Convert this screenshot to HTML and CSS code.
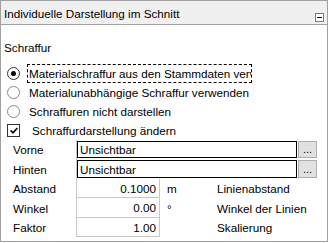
FILE: index.html
```html
<!DOCTYPE html>
<html lang="de">
<head>
    <meta charset="UTF-8">
    <title>Individuelle Darstellung im Schnitt</title>
    <link rel="stylesheet" href="styles.css">
</head>
<body>

    <div class="panel">
        <div class="panel-header">
            <span class="panel-title">Individuelle Darstellung im Schnitt</span>
            <span class="collapse-btn"></span>
        </div>

        <div class="panel-body">
            <div class="group-label">Schraffur</div>

            <!-- Radio options -->
            <div class="option">
                <span class="radio checked"></span>
                <span class="option-text focused">Materialschraffur aus den Stammdaten verwenden</span>
            </div>
            <div class="option">
                <span class="radio"></span>
                <span class="option-text">Materialunabhängige Schraffur verwenden</span>
            </div>
            <div class="option">
                <span class="radio"></span>
                <span class="option-text">Schraffuren nicht darstellen</span>
            </div>
            <div class="option">
                <span class="checkbox">
                    <svg width="8" height="7" viewBox="0 0 8 7"><path d="M0.6 3.4 L3 5.8 L7.4 1" fill="none" stroke="#000" stroke-width="1.6"/></svg>
                </span>
                <span class="option-text check-text">Schraffurdarstellung ändern</span>
            </div>

            <!-- Property grid -->
            <div class="props">
                <div class="prop-row h19">
                    <div class="prop-label">Vorne</div>
                    <div class="prop-input">Unsichtbar</div>
                    <div class="prop-btn">...</div>
                </div>
                <div class="prop-row h20">
                    <div class="prop-label">Hinten</div>
                    <div class="prop-input">Unsichtbar</div>
                    <div class="prop-btn">...</div>
                </div>
                <div class="prop-row h19">
                    <div class="prop-label">Abstand</div>
                    <div class="prop-value">0.1000</div>
                    <div class="prop-unit">m</div>
                    <div class="prop-desc">Linienabstand</div>
                </div>
                <div class="prop-row h20">
                    <div class="prop-label">Winkel</div>
                    <div class="prop-value">0.00</div>
                    <div class="prop-unit">°</div>
                    <div class="prop-desc">Winkel der Linien</div>
                </div>
                <div class="prop-row h19">
                    <div class="prop-label">Faktor</div>
                    <div class="prop-value">1.00</div>
                    <div class="prop-unit"></div>
                    <div class="prop-desc">Skalierung</div>
                </div>
            </div>
        </div>
    </div>

</body>
</html>
```

FILE: styles.css
```css
body {
    margin: 0;
    background: #ffffff;
    font-family: "Liberation Sans", Arial, sans-serif;
    font-size: 11.7px;
    color: #000000;
}

.panel {
    width: 326px;
    height: 240px;
    border: 1px solid #a0a0a0;
    background: #ffffff;
}

.panel-header {
    height: 23px;
    background: #f0f0f0;
    border-bottom: 1px solid #a0a0a0;
    display: flex;
    align-items: center;
    justify-content: space-between;
    padding: 0 3px 0 3px;
}

.panel-title {
    margin-top: 1px;
}

.collapse-btn {
    width: 7px;
    height: 7px;
    border: 1px solid #7a7a7a;
    background: #ffffff;
    margin-top: 9px;
    position: relative;
}

.collapse-btn::after {
    content: "";
    position: absolute;
    left: 1px;
    top: 3px;
    width: 5px;
    height: 1px;
    background: #000000;
}

.panel-body {
    padding-top: 15px;
}

.group-label {
    height: 16px;
    line-height: 16px;
    padding-left: 3px;
    margin-bottom: 8px;
}

.option {
    height: 19px;
    display: flex;
    align-items: center;
    padding-left: 6px;
}

.radio {
    width: 11px;
    height: 11px;
    border: 1px solid #8a8a8a;
    border-radius: 50%;
    background: #ffffff;
    display: flex;
    align-items: center;
    justify-content: center;
    flex-shrink: 0;
}

.radio.checked {
    border-color: #333333;
}

.radio.checked::after {
    content: "";
    width: 5px;
    height: 5px;
    border-radius: 50%;
    background: #000000;
}

.checkbox {
    width: 11px;
    height: 11px;
    border: 1px solid #333333;
    display: flex;
    align-items: center;
    justify-content: center;
    flex-shrink: 0;
}

.option-text {
    margin-left: 9px;
    white-space: nowrap;
}

.option-text.focused {
    margin-left: 7px;
    width: 222px;
    height: 17px;
    line-height: 17px;
    padding-left: 1px;
    border: 1px dashed #000000;
    overflow: hidden;
}

.check-text {
    margin-left: 12px;
}

.prop-row {
    display: flex;
    align-items: stretch;
}

.h19 {
    height: 19px;
}

.h20 {
    height: 20px;
}

.prop-label {
    width: 63px;
    padding-left: 12px;
    display: flex;
    align-items: center;
    border-right: 1px solid #c8c8c8;
}

.prop-input {
    width: 216px;
    margin: 1px 0;
    border: 1px solid #000000;
    padding-left: 2px;
    display: flex;
    align-items: center;
}

.prop-btn {
    width: 17px;
    margin: 1px 0 1px 1px;
    background: #e1e1e1;
    border: 1px solid #adadad;
    display: flex;
    align-items: center;
    justify-content: center;
    font-size: 11px;
    line-height: 1;
}

.prop-value {
    width: 79px;
    padding-right: 3px;
    border-bottom: 1px solid #c8c8c8;
    border-right: 1px solid #c8c8c8;
    display: flex;
    align-items: center;
    justify-content: flex-end;
}

.prop-unit {
    width: 50px;
    padding-left: 7px;
    display: flex;
    align-items: center;
}

.prop-desc {
    display: flex;
    align-items: center;
}
```
